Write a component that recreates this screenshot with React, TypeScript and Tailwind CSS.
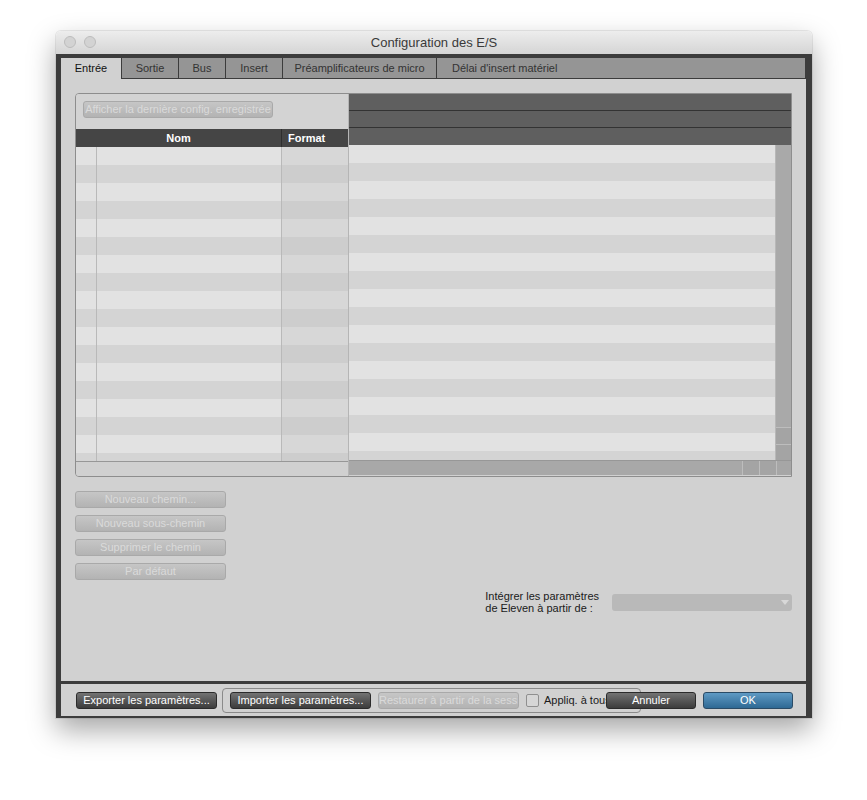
import React from "react";

const font = { fontFamily: '"Liberation Sans", Arial, sans-serif' };

const tabs = [
  { label: "Entrée", w: "w-[60px]" },
  { label: "Sortie", w: "w-[57px]" },
  { label: "Bus", w: "w-[47px]" },
  { label: "Insert", w: "w-[57px]" },
  { label: "Préamplificateurs de micro", w: "w-[154px]" },
];

const ROWS = Array.from({ length: 18 }, (_, i) => i);

function DisabledButton({ label, className = "" }: { label: string; className?: string }) {
  return (
    <div
      className={`flex h-[17px] items-center justify-center rounded-[3px] border border-[#a9a9a9] bg-gradient-to-b from-[#c6c6c6] to-[#b3b3b3] text-[11px] whitespace-nowrap overflow-hidden text-[#dadada] ${className}`}
    >
      {label}
    </div>
  );
}

function DarkButton({ label, className = "" }: { label: string; className?: string }) {
  return (
    <div
      className={`flex h-[17px] items-center justify-center rounded-[3px] border border-[#2b2b2b] bg-gradient-to-b from-[#737373] to-[#3c3c3c] text-[11px] text-white whitespace-nowrap ${className}`}
    >
      {label}
    </div>
  );
}

function LeftTable() {
  return (
    <div className="flex w-[272px] flex-col">
      <div className="flex h-[35px] items-start bg-[#d3d3d3] pl-[7px] pt-[7px]">
        <DisabledButton label="Afficher la dernière config. enregistrée" className="w-[190px]" />
      </div>
      <div className="flex h-[18px] bg-[#454545] text-[11px] font-bold text-white">
        <div className="flex w-[206px] items-center justify-center border-r border-[#2e2e2e]">Nom</div>
        <div className="flex w-[66px] items-center pl-[6px]">Format</div>
      </div>
      <div className="h-[315px] overflow-hidden">
        {ROWS.map((i) => (
          <div key={i} className={`flex h-[18px] ${i % 2 ? "bg-[#d4d4d4]" : "bg-[#e2e2e2]"}`}>
            <div className="w-[21px] border-r border-[#b9b9b9]" />
            <div className="w-[185px] border-r border-[#b9b9b9]" />
            <div className={`w-[66px] ${i % 2 ? "bg-[#cdcdcd]" : "bg-[#d7d7d7]"}`} />
          </div>
        ))}
      </div>
      <div className="h-[15px] border-t border-[#979797] bg-[#d0d0d0]" />
    </div>
  );
}

function RightTable() {
  return (
    <div className="flex flex-1 flex-col border-l border-[#b5b5b5]">
      <div className="h-[17px] border-b border-[#333] bg-[#5f5f5f]" />
      <div className="h-[17px] border-b border-[#333] bg-[#5f5f5f]" />
      <div className="h-[17px] bg-[#5f5f5f]" />
      <div className="flex h-[315px]">
        <div className="flex-1 overflow-hidden">
          {ROWS.map((i) => (
            <div key={i} className={`h-[18px] ${i % 2 ? "bg-[#d4d4d4]" : "bg-[#e2e2e2]"}`} />
          ))}
        </div>
        {/* vertical scrollbar */}
        <div className="flex w-[16px] flex-col border-l border-[#b8b8b8] bg-[#a9a9a9]">
          <div className="flex-1" />
          <div className="h-[17px] border-t border-[#bdbdbd] bg-[#a4a4a4]" />
          <div className="h-[16px] border-t border-[#bdbdbd] bg-[#a4a4a4]" />
        </div>
      </div>
      {/* horizontal scrollbar */}
      <div className="flex h-[15px] border-t border-[#979797] bg-[#a8a8a8]">
        <div className="flex-1" />
        <div className="w-[17px] border-l border-[#bdbdbd] bg-[#a4a4a4]" />
        <div className="w-[17px] border-l border-[#bdbdbd] bg-[#a4a4a4]" />
        <div className="w-[15px] border-l border-[#bdbdbd] bg-[#a6a6a6]" />
      </div>
    </div>
  );
}

export default function App() {
  return (
    <div className="min-h-[800px] bg-white pl-[56px] pt-[31px]" style={font}>
      <div className="w-[756px] overflow-hidden rounded-t-[5px] shadow-[0_12px_28px_rgba(0,0,0,0.35),0_0_0_1px_rgba(0,0,0,0.08)]">
        {/* title bar */}
        <div className="relative flex h-[23px] items-center justify-center bg-gradient-to-b from-[#ededed] to-[#d5d5d5]">
          <div className="absolute left-[8px] top-[5px] flex gap-[8px]">
            <div className="h-[12px] w-[12px] rounded-full border border-[#bcbcbc] bg-[#d3d3d3]" />
            <div className="h-[12px] w-[12px] rounded-full border border-[#bcbcbc] bg-[#d3d3d3]" />
          </div>
          <span className="text-[13px] text-[#3a3a3a]">Configuration des E/S</span>
        </div>

        {/* dark frame */}
        <div className="bg-[#3c3c3c] pb-[2px] pl-[5px] pr-[6px] pt-[4px]">
          <div className="flex h-[21px] pr-[1px]">
            {tabs.map((t, i) => (
              <div
                key={t.label}
                className={`flex ${t.w} items-center justify-center text-[11px] ${
                  i === 0
                    ? "bg-[#d1d1d1] text-[#111]"
                    : "border-b border-l border-[#3c3c3c] bg-[#959595] text-[#333]"
                }`}
              >
                {t.label}
              </div>
            ))}
            <div className="flex flex-1 items-center border-b border-l border-[#3c3c3c] bg-[#959595] pl-[15px] text-[11px] text-[#333]">
              Délai d'insert matériel
            </div>
          </div>

          {/* main panel */}
          <div className="flex h-[602px] flex-col bg-[#d1d1d1] px-[14px] pt-[14px]">
            <div className="flex h-[384px] overflow-hidden rounded-l-[4px] border border-[#8d8d8d]">
              <LeftTable />
              <RightTable />
            </div>

            <div className="mt-[14px] flex w-[151px] flex-col gap-[7px]">
              <DisabledButton label="Nouveau chemin..." />
              <DisabledButton label="Nouveau sous-chemin" />
              <DisabledButton label="Supprimer le chemin" />
              <DisabledButton label="Par défaut" />
            </div>

            <div className="mt-[10px] flex items-center justify-end gap-[13px]">
              <div className="text-[11px] leading-[12px] text-[#1a1a1a]">
                Intégrer les paramètres
                <br />
                de Eleven à partir de :
              </div>
              <div className="relative h-[17px] w-[180px] rounded-[3px] bg-[#b9b9b9]">
                <div className="absolute right-[3px] top-[6px] h-0 w-0 border-x-[4px] border-t-[5px] border-x-transparent border-t-[#d8d8d8]" />
              </div>
            </div>
          </div>

          {/* bottom bar */}
          <div className="mt-[3px] flex h-[32px] items-center bg-[#d1d1d1] pl-[15px]">
            <DarkButton label="Exporter les paramètres..." className="w-[141px]" />
            <div className="ml-[5px] flex h-[25px] w-[419px] items-center rounded-[4px] border border-[#8a8a8a] pl-[7px]">
              <DarkButton label="Importer les paramètres..." className="w-[141px]" />
              <DisabledButton label="Restaurer à partir de la session" className="ml-[7px] w-[141px] justify-start" />
              <div className="ml-[7px] h-[13px] w-[13px] shrink-0 rounded-[2px] border border-[#8f8f8f] bg-[#d6d6d6]" />
              <span className="ml-[5px] whitespace-nowrap text-[11px] text-[#1a1a1a]">Appliq. à tous</span>
            </div>
            <DarkButton label="Annuler" className="relative z-10 -ml-[35px] w-[90px]" />
            <div className="ml-[7px] flex h-[17px] w-[90px] items-center justify-center rounded-[3px] border border-[#2a4b66] bg-gradient-to-b from-[#5f9ac4] to-[#2e6994] text-[11px] text-white">
              OK
            </div>
          </div>
        </div>
      </div>
    </div>
  );
}
